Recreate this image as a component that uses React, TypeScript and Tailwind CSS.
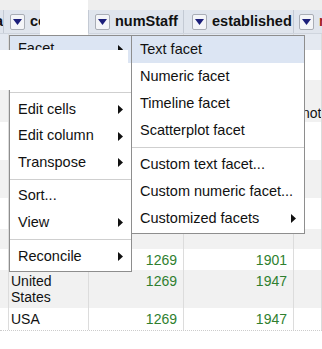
import { ReactNode } from 'react';

const FONT = "font-['Liberation_Sans','Arial',sans-serif]";

function DropButton() {
  return (
    <span className="flex h-[16px] w-[15px] shrink-0 items-center justify-center rounded-[2px] border border-[#a9adb5] bg-[#f4f5f8]">
      <svg width="9" height="6" viewBox="0 0 9 6">
        <path d="M0 0 H9 L4.5 6 Z" fill="#1c1f7a" />
      </svg>
    </span>
  );
}

function Arrow() {
  return (
    <svg width="5" height="9" viewBox="0 0 5 9" className="shrink-0">
      <path d="M0 0 L5 4.5 L0 9 Z" fill="#111" />
    </svg>
  );
}

type Item = { label: string; sub?: boolean; active?: boolean } | 'sep';

function Menu({ items, className, itemH }: { items: Item[]; className: string; itemH: string }) {
  return (
    <div className={`absolute border border-[#8e8e8e] bg-white pb-[1px] text-[14.5px] text-[#111] ${className}`}>
      {items.map((it, i) =>
        it === 'sep' ? (
          <div key={i} className="my-[3px] h-px bg-[#cfcfcf]" />
        ) : (
          <div
            key={i}
            className={`flex ${itemH} items-center justify-between pl-[8px] pr-[8px] ${it.active ? 'bg-[#dce5f3]' : ''}`}
          >
            <span>{it.label}</span>
            {it.sub && <Arrow />}
          </div>
        )
      )}
    </div>
  );
}

function Row({ h, bg, cells }: { h: number; bg: string; cells?: ReactNode[] }) {
  const widths = ['w-[9px]', 'w-[80px]', 'w-[95px]', 'w-[110px]', 'flex-1'];
  return (
    <div className={`flex ${bg}`} style={{ height: h }}>
      {widths.map((w, i) => (
        <div
          key={i}
          className={`${w} shrink-0 overflow-hidden border-r border-[#dcdcdc] px-[2px] pt-[3px] text-[14px] leading-[16px] ${
            i === 2 || i === 3 ? 'pr-[6px] text-right text-[#2f7f2f]' : 'text-[#111]'
          }`}
        >
          {cells?.[i]}
        </div>
      ))}
    </div>
  );
}

export default function App() {
  return (
    <div className={`relative h-[349px] w-[322px] overflow-hidden bg-white ${FONT}`}>
      <div className="h-[10px] bg-[#eeeeee]" />
      {/* column headers */}
      <div className="flex h-[24px] items-center border-b border-[#cfd5de] bg-[#e0e5ed] text-[14.5px] font-bold text-[#111]">
        <div className="flex h-full w-[4px] shrink-0 items-center justify-end overflow-hidden border-r border-[#c4cad4]">
          <span>a</span>
        </div>
        <div className="flex h-full w-[85px] shrink-0 items-center gap-[5px] overflow-hidden border-r border-[#c4cad4] pl-[6px]">
          <DropButton />
          <span>country</span>
        </div>
        <div className="flex h-full w-[95px] shrink-0 items-center gap-[5px] border-r border-[#c4cad4] pl-[6px]">
          <DropButton />
          <span>numStaff</span>
        </div>
        <div className="flex h-full w-[110px] shrink-0 items-center gap-[5px] border-r border-[#c4cad4] pl-[8px]">
          <DropButton />
          <span>established</span>
        </div>
        <div className="flex h-full flex-1 items-center gap-[5px] overflow-hidden pl-[5px]">
          <DropButton />
          <span className="text-[#a32020]">name</span>
        </div>
      </div>
      {/* data rows */}
      <Row h={16} bg="bg-[#e4e9f1]" />
      <Row h={30} bg="bg-white" />
      <Row h={42} bg="bg-[#f1f1f1]" cells={['', '', '', '', <span className="relative top-[22px] left-[6px]">not</span>]} />
      <Row h={38} bg="bg-white" />
      <Row h={38} bg="bg-[#f1f1f1]" />
      <Row h={31} bg="bg-white" />
      <Row h={20} bg="bg-[#f1f1f1]" />
      <Row h={21} bg="bg-white" cells={['', '', '1269', '1901', '']} />
      <Row h={38} bg="bg-[#f1f1f1]" cells={['', 'United States', '1269', '1947', '']} />
      <Row h={22} bg="bg-white" cells={['', 'USA', '1269', '1947', '']} />
      <div className="h-px border-b border-dotted border-[#cccccc]" />

      {/* erased patches */}
      <div className="absolute left-[40px] top-0 h-[49px] w-[48px] bg-white" />

      <Menu
        className="left-[9px] top-[35px] w-[123px]"
        itemH="h-[26.6px]"
        items={[
          { label: 'Facet', sub: true, active: true },
          { label: 'Text filter' },
          'sep',
          { label: 'Edit cells', sub: true },
          { label: 'Edit column', sub: true },
          { label: 'Transpose', sub: true },
          'sep',
          { label: 'Sort...' },
          { label: 'View', sub: true },
          'sep',
          { label: 'Reconcile', sub: true },
        ]}
      />
      <div className="absolute left-0 top-[50px] h-[40px] w-[128px] bg-white" />
      <Menu
        className="left-[131px] top-[35px] w-[174px]"
        itemH="h-[27px]"
        items={[
          { label: 'Text facet', active: true },
          { label: 'Numeric facet' },
          { label: 'Timeline facet' },
          { label: 'Scatterplot facet' },
          'sep',
          { label: 'Custom text facet...' },
          { label: 'Custom numeric facet...' },
          { label: 'Customized facets', sub: true },
        ]}
      />
    </div>
  );
}
